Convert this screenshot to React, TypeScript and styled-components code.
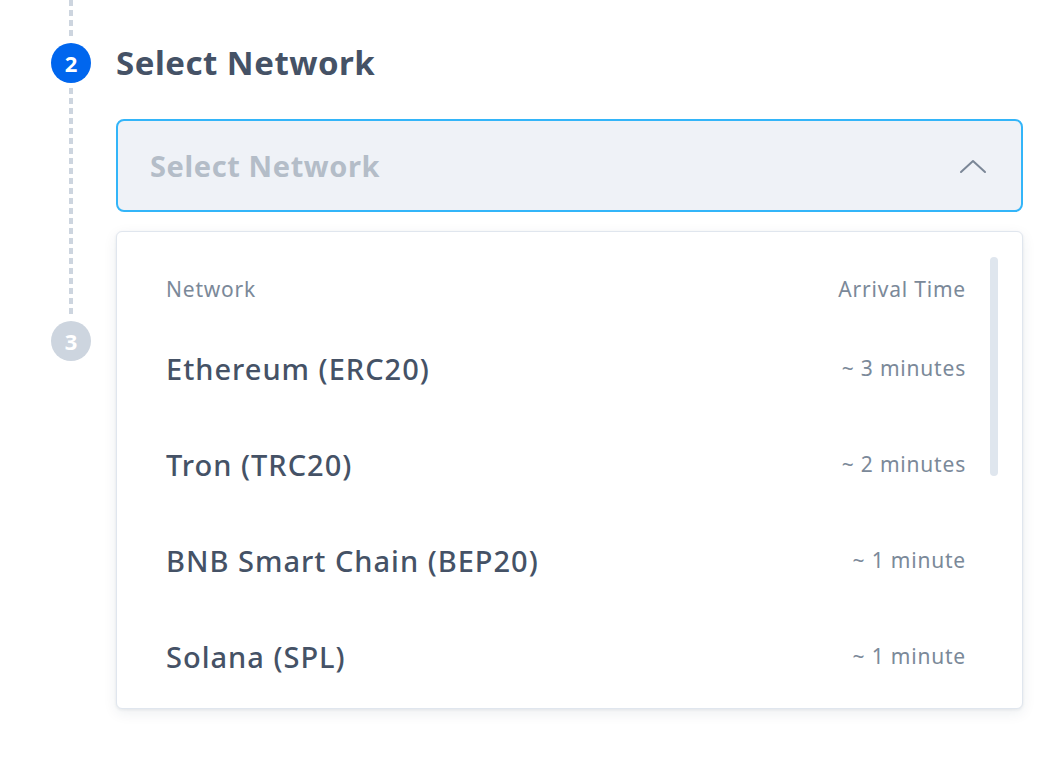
import React from "react";
import styled, { createGlobalStyle } from "styled-components";

const GlobalStyle = createGlobalStyle`
  html, body { margin: 0; padding: 0; background: #ffffff; }
  body { font-family: "Noto Sans", "Liberation Sans", sans-serif; -webkit-font-smoothing: antialiased; }
  * { box-sizing: border-box; }
`;

const Page = styled.div`
  width: 1062px;
  height: 772px;
  overflow: hidden;
  display: grid;
  grid-template-columns: 40px 907px;
  column-gap: 25px;
  padding-left: 51px;
`;

const Rail = styled.div`
  display: flex;
  flex-direction: column;
  align-items: center;
`;

const Dots = styled.div<{ $h: number }>`
  width: 4px;
  height: ${(p) => p.$h}px;
  background: repeating-linear-gradient(
    to bottom,
    #cdd5df 0px,
    #cdd5df 6px,
    transparent 6px,
    transparent 10px
  );
`;

const StepCircle = styled.div<{ $active?: boolean }>`
  width: 40px;
  height: 40px;
  border-radius: 50%;
  background: ${(p) => (p.$active ? "#0066ee" : "#cdd5df")};
  color: #ffffff;
  font-weight: 700;
  font-size: 22px;
  display: flex;
  align-items: center;
  justify-content: center;
  margin: ${(p) => (p.$active ? "3px 0 5px" : "3px 0 0")};
`;

const Content = styled.div`
  position: relative;
  display: flex;
  flex-direction: column;
`;

const Heading = styled.h2`
  margin: 43px 0 0;
  height: 40px;
  line-height: 40px;
  font-size: 33px;
  font-weight: 700;
  color: #455266;
  letter-spacing: 0.5px;
`;

const SelectBox = styled.div`
  margin-top: 36px;
  height: 93px;
  border: 2px solid #33b5f9;
  border-radius: 8px;
  background: #eff2f7;
  display: flex;
  align-items: center;
  justify-content: space-between;
  padding: 0 34px 0 32px;
`;

const Placeholder = styled.span`
  font-size: 29px;
  font-weight: 700;
  color: #b4bdc8;
  letter-spacing: 0.6px;
`;

const Menu = styled.div`
  position: absolute;
  top: 231px;
  left: 0;
  width: 907px;
  height: 478px;
  background: #ffffff;
  border: 1px solid #e0e6ee;
  border-radius: 6px;
  box-shadow: 0 4px 14px rgba(30, 50, 80, 0.08), 0 1px 3px rgba(30, 50, 80, 0.08);
  padding: 25px 56px 0 49px;
  overflow: hidden;
`;

const Scrollbar = styled.div`
  position: absolute;
  top: 25px;
  right: 24px;
  width: 8px;
  height: 219px;
  border-radius: 4px;
  background: #dfe6ee;
`;

const Row = styled.div<{ $h: number }>`
  height: ${(p) => p.$h}px;
  display: flex;
  align-items: center;
  justify-content: space-between;
`;

const SmallText = styled.span`
  font-size: 21px;
  color: #7b8999;
  letter-spacing: 0.8px;
`;

const NetName = styled.span`
  font-size: 29px;
  font-weight: 500;
  color: #455266;
  letter-spacing: 1px;
`;

const Chevron = () => (
  <svg width="28" height="16" viewBox="0 0 28 16" fill="none">
    <polyline points="2,14 14,3 26,14" stroke="#7b8797" strokeWidth="2" strokeLinecap="round" strokeLinejoin="round" />
  </svg>
);

const networks = [
  { name: "Ethereum (ERC20)", time: "~ 3 minutes" },
  { name: "Tron (TRC20)", time: "~ 2 minutes" },
  { name: "BNB Smart Chain (BEP20)", time: "~ 1 minute" },
  { name: "Solana (SPL)", time: "~ 1 minute" },
];

export default function App() {
  return (
    <>
      <GlobalStyle />
      <Page>
        <Rail>
          <Dots $h={40} />
          <StepCircle $active>2</StepCircle>
          <Dots $h={230} />
          <StepCircle>3</StepCircle>
        </Rail>
        <Content>
          <Heading>Select Network</Heading>
          <SelectBox>
            <Placeholder>Select Network</Placeholder>
            <Chevron />
          </SelectBox>
          <Menu>
            <Scrollbar />
            <Row $h={63}>
              <SmallText>Network</SmallText>
              <SmallText>Arrival Time</SmallText>
            </Row>
            {networks.map((n) => (
              <Row $h={96} key={n.name}>
                <NetName>{n.name}</NetName>
                <SmallText>{n.time}</SmallText>
              </Row>
            ))}
          </Menu>
        </Content>
      </Page>
    </>
  );
}
